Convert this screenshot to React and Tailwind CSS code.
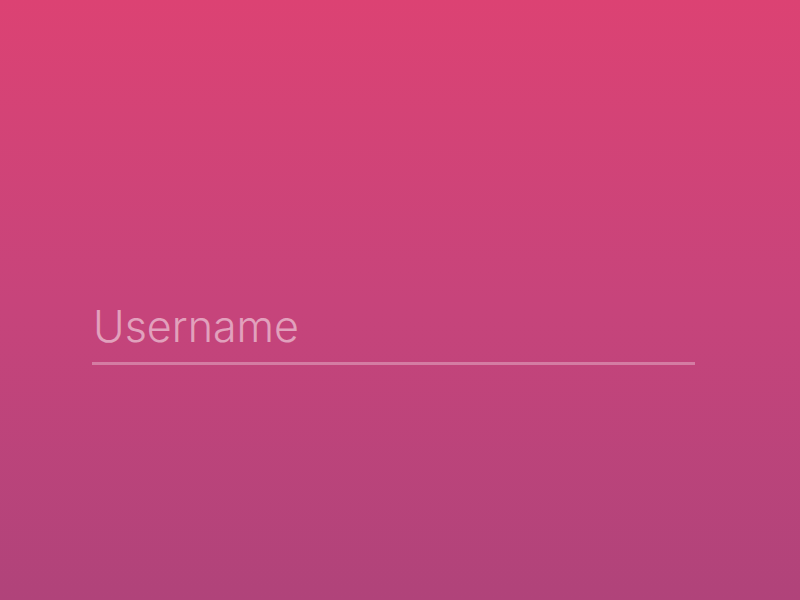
export default function App() {
  return (
    <div className="w-full h-[600px] bg-gradient-to-b from-[#dc4273] via-[#c7447b] to-[#b0437a] pt-[300px] pl-[92px]" style={{ fontFamily: "Inter, 'Noto Sans', sans-serif" }}>
      <div className="w-[603px] flex flex-col">
        <div className="text-[43px] leading-[52px] font-light text-white/50 pl-[1px]">Username</div>
        <div className="mt-[10px] h-[3px] w-full bg-white/30"></div>
      </div>
    </div>
  );
}
